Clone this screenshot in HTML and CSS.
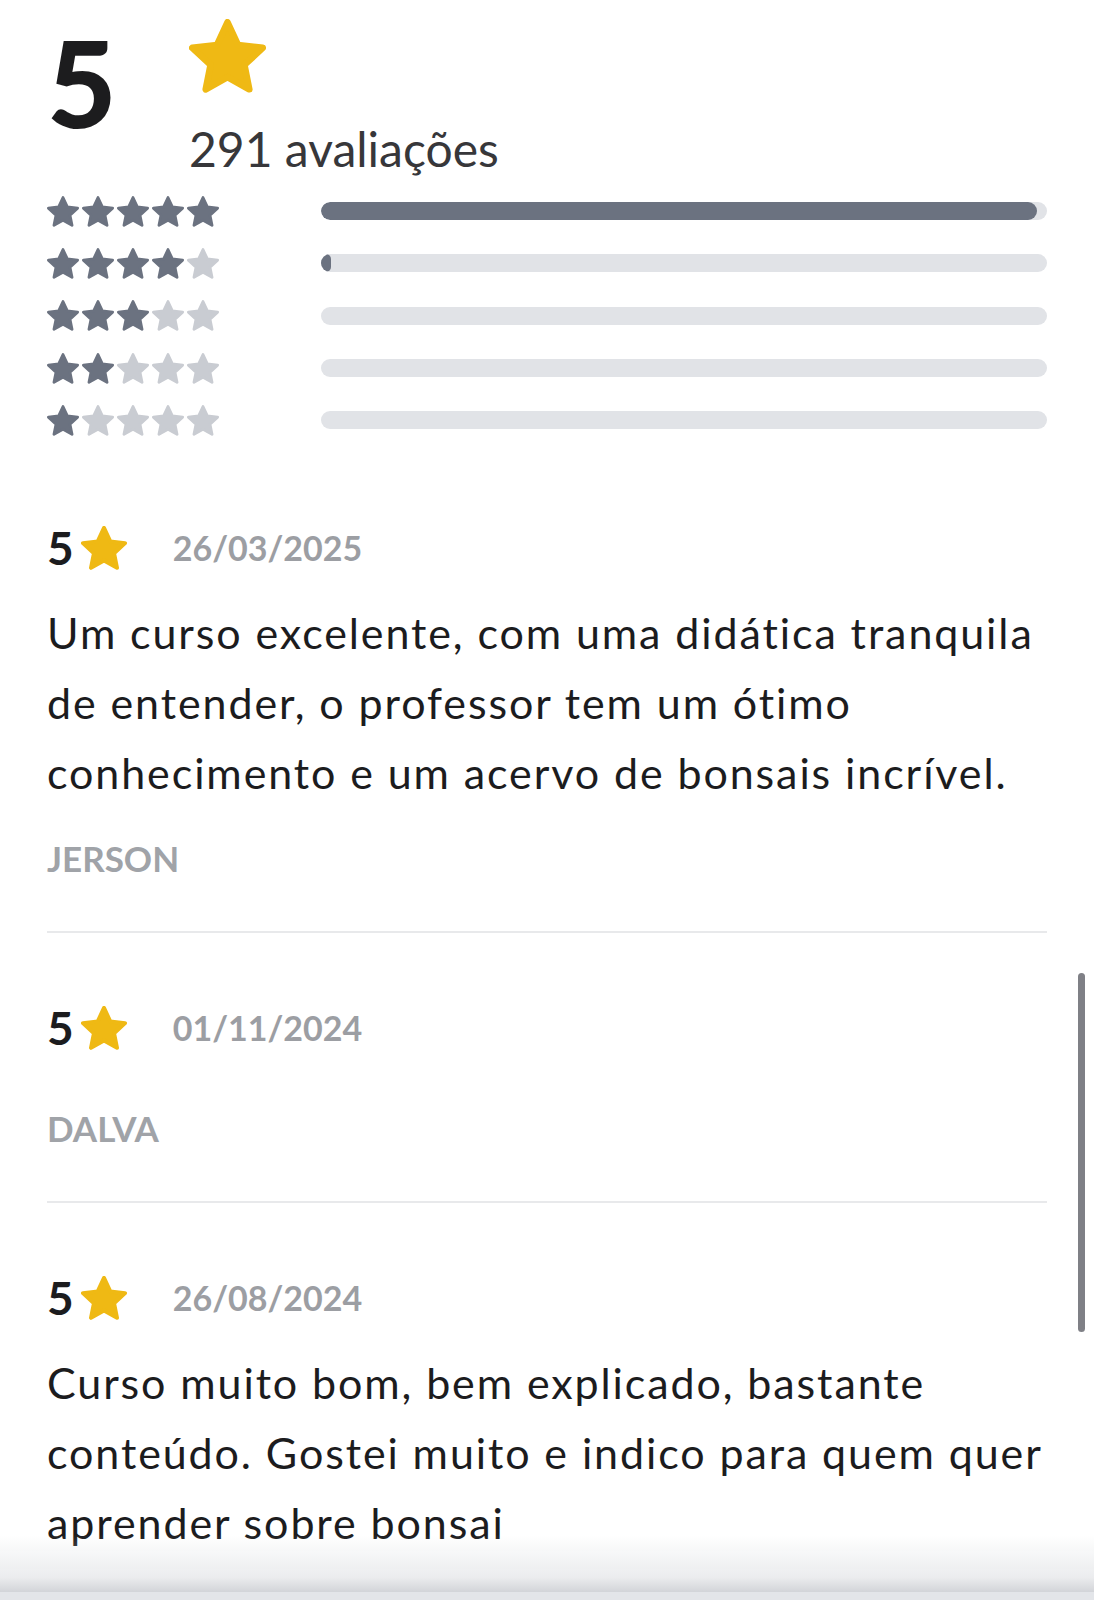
FILE: index.html
```html
<!DOCTYPE html>
<html lang="pt-BR">
<head>
<meta charset="utf-8">
<title>Avaliações</title>
<link rel="stylesheet" href="styles.css">
</head>
<body>
<svg class="defs" width="0" height="0" aria-hidden="true">
  <defs>
    <path id="star" d="M50 0 L64.11 30.58 L97.55 34.55 L72.82 57.42 L79.39 90.45 L50 74 L20.61 90.45 L27.18 57.42 L2.45 34.55 L35.89 30.58 Z"/>
  </defs>
</svg>
<main class="page">
  <section class="summary">
    <div class="score-head">
      <div class="score">5</div>
      <div class="score-meta">
        <svg class="star star-big" viewBox="-2 -4 104 99"><use href="#star"/></svg>
        <div class="count">291 avaliações</div>
      </div>
    </div>
    <div class="dist">
      <div class="dist-row">
        <div class="stars">
          <svg class="star on" viewBox="-2 -4 104 99"><use href="#star"/></svg>
          <svg class="star on" viewBox="-2 -4 104 99"><use href="#star"/></svg>
          <svg class="star on" viewBox="-2 -4 104 99"><use href="#star"/></svg>
          <svg class="star on" viewBox="-2 -4 104 99"><use href="#star"/></svg>
          <svg class="star on" viewBox="-2 -4 104 99"><use href="#star"/></svg>
        </div>
        <div class="track"><div class="fill" style="width:98.6%"></div></div>
      </div>
      <div class="dist-row">
        <div class="stars">
          <svg class="star on" viewBox="-2 -4 104 99"><use href="#star"/></svg>
          <svg class="star on" viewBox="-2 -4 104 99"><use href="#star"/></svg>
          <svg class="star on" viewBox="-2 -4 104 99"><use href="#star"/></svg>
          <svg class="star on" viewBox="-2 -4 104 99"><use href="#star"/></svg>
          <svg class="star off" viewBox="-2 -4 104 99"><use href="#star"/></svg>
        </div>
        <div class="track"><div class="fill" style="width:1.4%"></div></div>
      </div>
      <div class="dist-row">
        <div class="stars">
          <svg class="star on" viewBox="-2 -4 104 99"><use href="#star"/></svg>
          <svg class="star on" viewBox="-2 -4 104 99"><use href="#star"/></svg>
          <svg class="star on" viewBox="-2 -4 104 99"><use href="#star"/></svg>
          <svg class="star off" viewBox="-2 -4 104 99"><use href="#star"/></svg>
          <svg class="star off" viewBox="-2 -4 104 99"><use href="#star"/></svg>
        </div>
        <div class="track"></div>
      </div>
      <div class="dist-row">
        <div class="stars">
          <svg class="star on" viewBox="-2 -4 104 99"><use href="#star"/></svg>
          <svg class="star on" viewBox="-2 -4 104 99"><use href="#star"/></svg>
          <svg class="star off" viewBox="-2 -4 104 99"><use href="#star"/></svg>
          <svg class="star off" viewBox="-2 -4 104 99"><use href="#star"/></svg>
          <svg class="star off" viewBox="-2 -4 104 99"><use href="#star"/></svg>
        </div>
        <div class="track"></div>
      </div>
      <div class="dist-row">
        <div class="stars">
          <svg class="star on" viewBox="-2 -4 104 99"><use href="#star"/></svg>
          <svg class="star off" viewBox="-2 -4 104 99"><use href="#star"/></svg>
          <svg class="star off" viewBox="-2 -4 104 99"><use href="#star"/></svg>
          <svg class="star off" viewBox="-2 -4 104 99"><use href="#star"/></svg>
          <svg class="star off" viewBox="-2 -4 104 99"><use href="#star"/></svg>
        </div>
        <div class="track"></div>
      </div>
    </div>
  </section>

  <article class="review">
    <div class="review-meta">
      <span class="r-score">5</span>
      <svg class="star star-gold star-small" viewBox="-2 -4 104 99"><use href="#star"/></svg>
      <span class="r-date">26/03/2025</span>
    </div>
    <p class="r-text">Um curso excelente, com uma didática tranquila de entender, o professor tem um ótimo conhecimento e um acervo de bonsais incrível.</p>
    <div class="r-name">JERSON</div>
  </article>

  <article class="review">
    <div class="review-meta">
      <span class="r-score">5</span>
      <svg class="star star-gold star-small" viewBox="-2 -4 104 99"><use href="#star"/></svg>
      <span class="r-date">01/11/2024</span>
    </div>
    <div class="r-name">DALVA</div>
  </article>

  <article class="review">
    <div class="review-meta">
      <span class="r-score">5</span>
      <svg class="star star-gold star-small" viewBox="-2 -4 104 99"><use href="#star"/></svg>
      <span class="r-date">26/08/2024</span>
    </div>
    <p class="r-text">Curso muito bom, bem explicado, bastante conteúdo. Gostei muito e indico para quem quer aprender sobre bonsai</p>
  </article>
</main>
<div class="scrollbar"></div>
<div class="bottom-fade"></div>
</body>
</html>
```

FILE: styles.css
```css
html, body {
  margin: 0;
  padding: 0;
  background: #ffffff;
}

body {
  font-family: "Lato", "Noto Sans", sans-serif;
  color: #1c1c1e;
}

.defs {
  position: absolute;
  width: 0;
  height: 0;
}

.page {
  width: 1000px;
  padding: 0 47px;
}

/* star icon */
.star {
  display: block;
  stroke-linejoin: round;
  stroke-width: 9;
}
.star-big,
.star-gold {
  fill: #efb914;
  stroke: #efb914;
}
.star.on {
  fill: #6b7280;
  stroke: #6b7280;
}
.star.off {
  fill: #c9ccd2;
  stroke: #c9ccd2;
}

/* summary */
.summary {
  display: flex;
  flex-direction: column;
}

.score-head {
  display: flex;
  align-items: flex-start;
  height: 185px;
}

.score {
  font-size: 120px;
  font-weight: 900;
  line-height: 118px;
  margin-top: 23px;
  width: 142px;
  color: #1c1c1e;
}

.score-meta {
  display: flex;
  flex-direction: column;
  padding-top: 19px;
}

.star-big {
  width: 77px;
  height: 74px;
}

.count {
  font-size: 48px;
  line-height: 58px;
  margin-top: 27px;
  color: #37373a;
}

.dist {
  display: flex;
  flex-direction: column;
}

.dist-row {
  display: flex;
  align-items: center;
  height: 52.3px;
}

.stars {
  display: flex;
  gap: 3px;
  width: 274px;
}

.stars .star {
  width: 32px;
  height: 31px;
}

.track {
  flex: 1;
  height: 18px;
  border-radius: 9px;
  background: #e1e3e7;
  overflow: hidden;
}

.fill {
  height: 100%;
  border-radius: 9px;
  background: #6b7280;
}

/* reviews */
.review {
  display: flex;
  flex-direction: column;
  padding: 77px 0 53px;
  border-bottom: 2px solid #e8e9eb;
}
.review + .review {
  padding-top: 70px;
}
.review:last-child {
  border-bottom: 0;
  padding-bottom: 40px;
}

.review-meta {
  display: flex;
  align-items: center;
  height: 50px;
  margin-bottom: 25px;
}

.r-score {
  font-size: 46px;
  font-weight: 700;
  line-height: 50px;
  color: #1c1c1e;
}

.star-small {
  width: 46px;
  height: 44px;
  margin-left: 7px;
}

.r-date {
  font-size: 34px;
  font-weight: 700;
  line-height: 50px;
  margin-left: 46px;
  color: #9c9ea3;
}

.r-text {
  margin: 0;
  font-size: 43px;
  letter-spacing: 1.9px;
  line-height: 70px;
  color: #1c1c1e;
}

.r-name {
  margin-top: 30px;
  font-size: 35px;
  font-weight: 700;
  line-height: 40px;
  color: #a0a3a8;
}

/* overlays */
.scrollbar {
  position: fixed;
  left: 1078px;
  top: 973px;
  width: 7px;
  height: 359px;
  border-radius: 4px;
  background: #7f8086;
}

.bottom-fade {
  position: fixed;
  left: 0;
  right: 0;
  bottom: 0;
  height: 66px;
  background: linear-gradient(to bottom, rgba(225, 227, 231, 0) 0%, rgba(215, 217, 221, 0.5) 75%, rgba(205, 207, 212, 0.9) 100%);
  border-bottom: 8px solid #e3e5e9;
  box-sizing: border-box;
}
```
